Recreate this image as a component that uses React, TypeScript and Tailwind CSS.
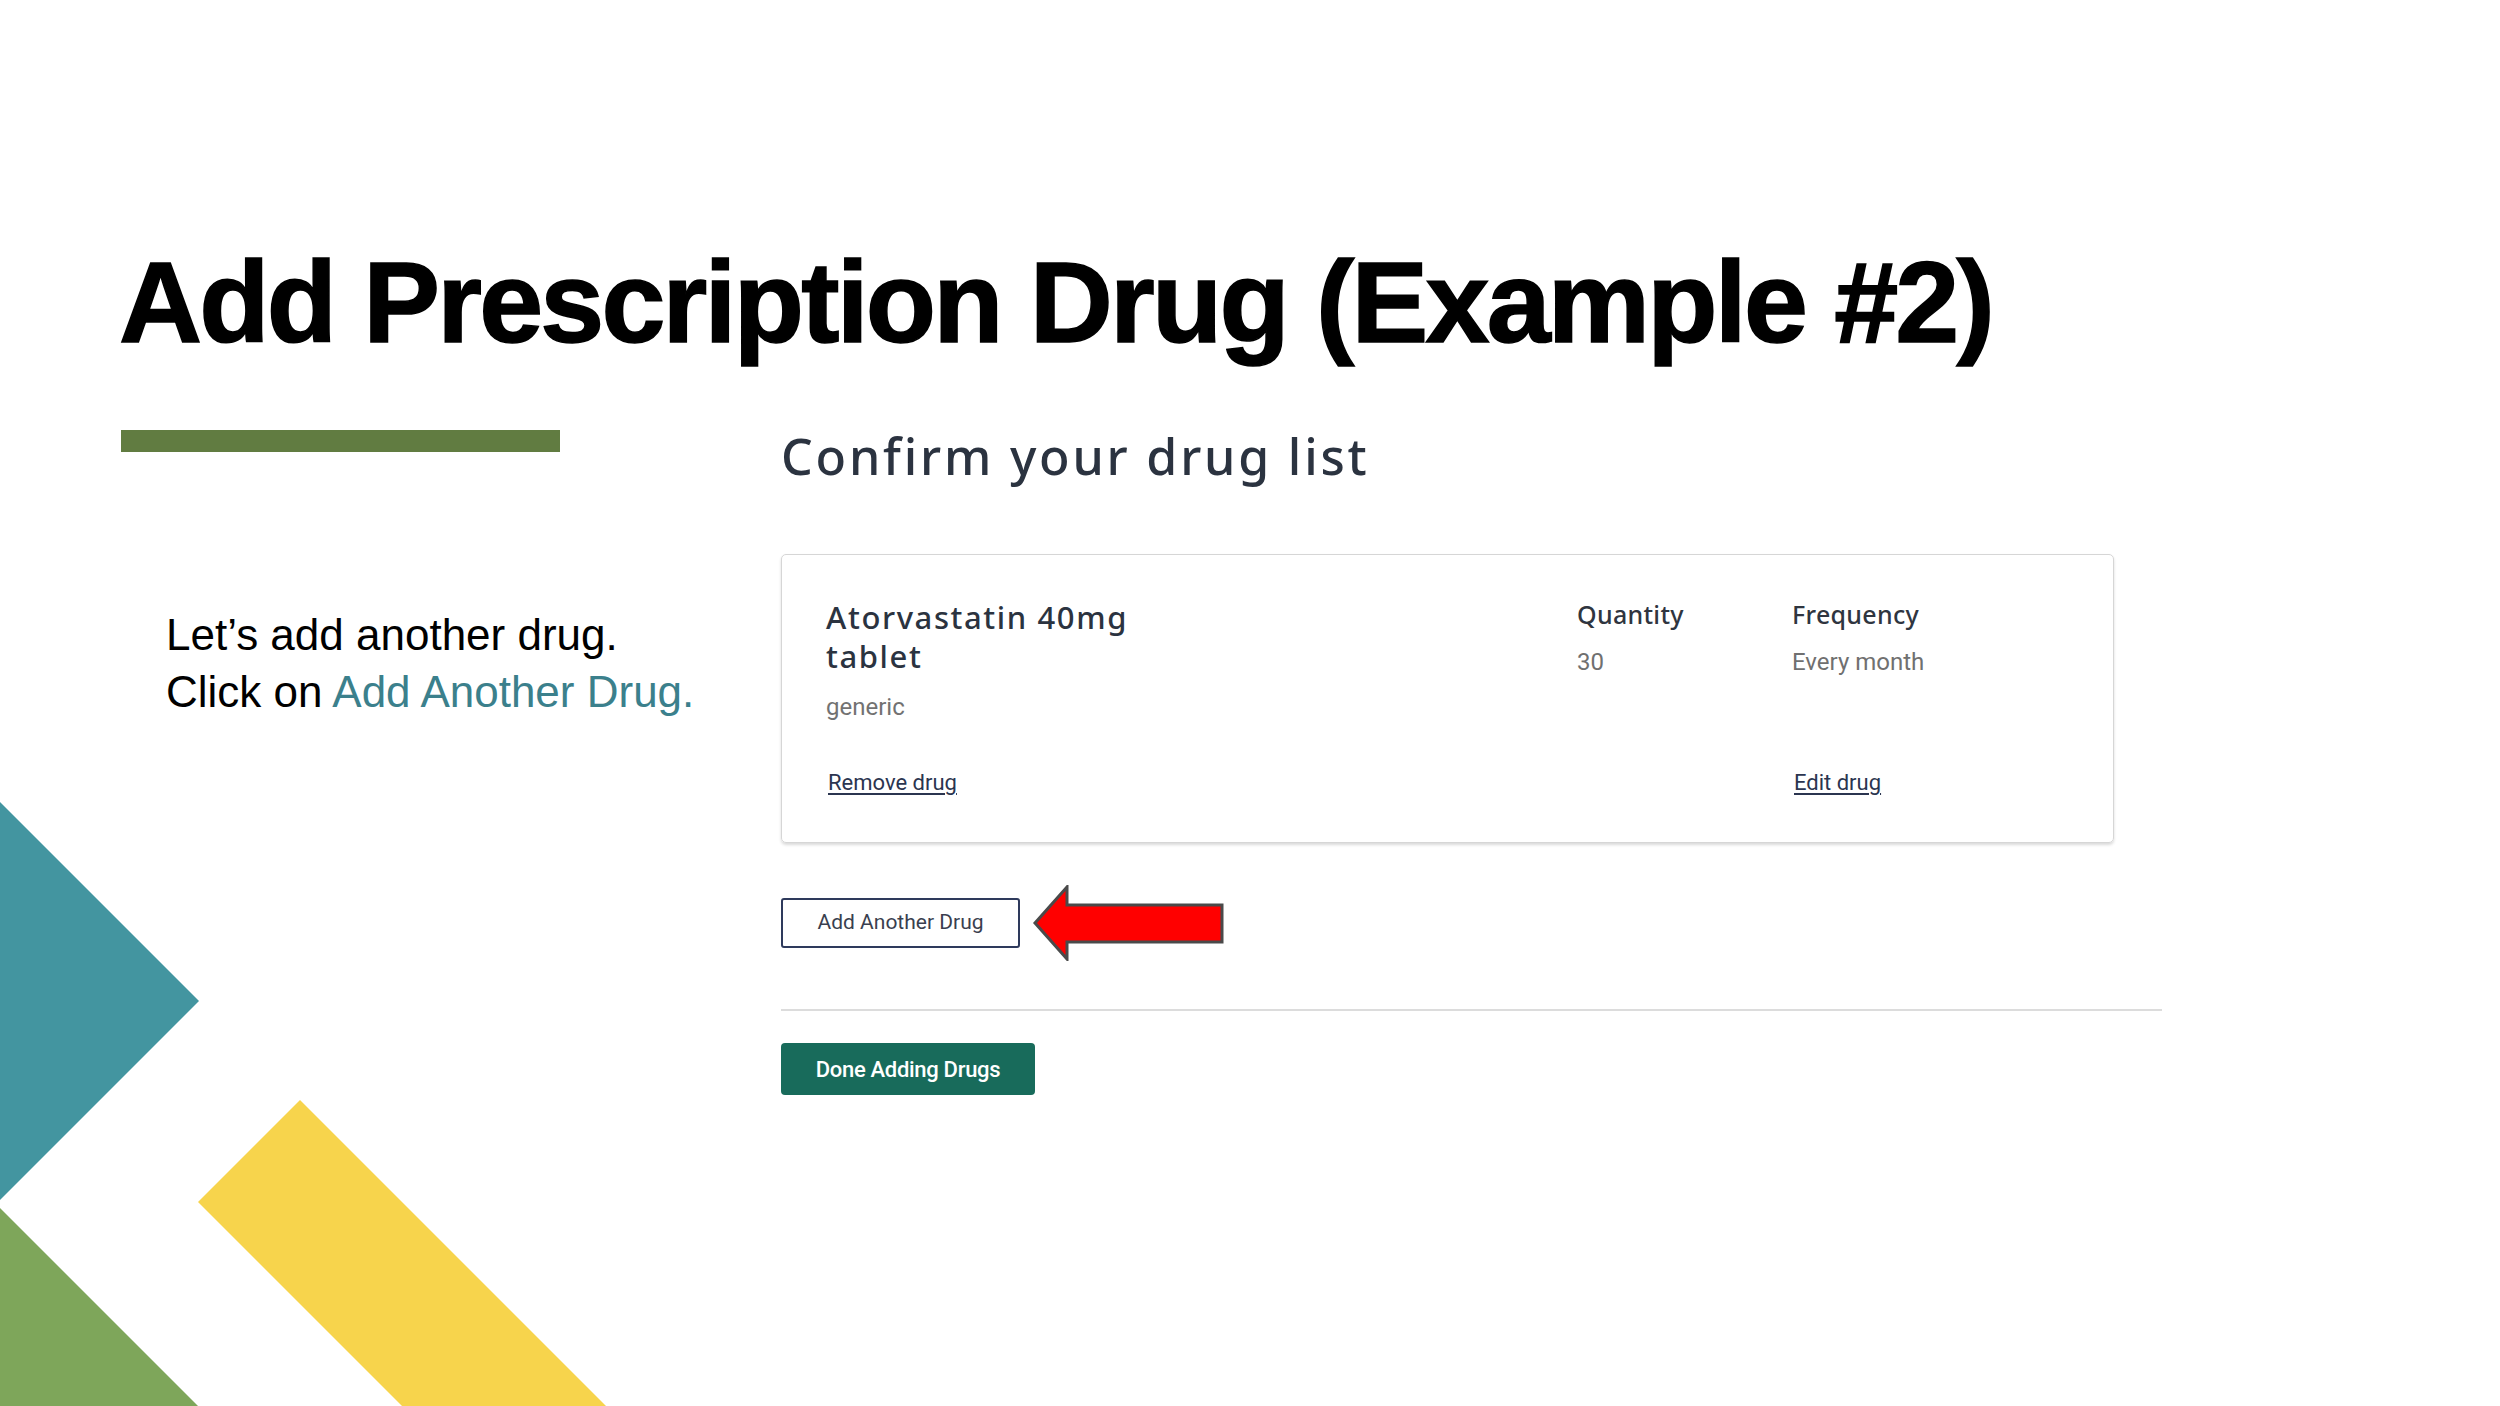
import React from "react";

const drugs = [
  {
    name: "Atorvastatin 40mg tablet",
    kind: "generic",
    quantity: "30",
    frequency: "Every month",
  },
];

function Decorations() {
  return (
    <svg
      className="absolute left-0 top-0 pointer-events-none"
      width="620"
      height="1406"
      viewBox="0 0 620 1406"
      aria-hidden="true"
    >
      <polygon points="0,802 199,1001 0,1200" fill="#4395a0" />
      <polygon points="0,1208 198,1406 0,1406" fill="#7ea65a" />
      <polygon points="300,1100 198,1202 402,1406 606,1406" fill="#f7d44c" />
    </svg>
  );
}

function RedArrow() {
  return (
    <svg width="194" height="76" viewBox="0 0 194 76" aria-hidden="true">
      <polygon
        points="3,38 35,2 35,20 190,20 190,57 35,57 35,74"
        fill="#ff0000"
        stroke="#4a4a4a"
        strokeWidth="3"
        strokeLinejoin="miter"
      />
    </svg>
  );
}

export default function App() {
  return (
    <div className="relative w-[2500px] h-[1406px] overflow-hidden bg-white">
      <Decorations />

      <div className="relative pt-[245px]">
        <h1 className="pl-[119px] font-['Liberation_Sans',Arial,sans-serif] text-[115px] leading-none font-bold tracking-[-2.8px] text-black [-webkit-text-stroke:1.5px_#000]">
          Add Prescription Drug (Example #2)
        </h1>

        <div className="flex mt-[70px]">
          {/* left column: accent bar + hint */}
          <div className="w-[781px] shrink-0 pl-[121px]">
            <div className="w-[439px] h-[22px] bg-[#617c41]" />
            <p className="mt-[154px] pl-[45px] font-['Liberation_Sans',Arial,sans-serif] text-[44px] leading-[57px] text-black">
              Let’s add another drug.
              <br />
              Click on <span className="text-[#3b808c]">Add Another Drug.</span>
            </p>
          </div>

          {/* right column: the drug list screen */}
          <div className="w-[1381px]">
            <h2 className="mt-[1px] font-['Noto_Sans',sans-serif] text-[50px] leading-[50px] font-medium tracking-[2.8px] text-[#2b3340]">
              Confirm your drug list
            </h2>

            {drugs.map((d) => (
              <div
                key={d.name}
                className="mt-[73px] w-[1333px] border border-[#d6d6d6] rounded-[5px] shadow-[0_2px_3px_rgba(0,0,0,0.15)] pt-[43px] pb-[45px] pl-[44px] grid grid-cols-[751px_215px_1fr]"
              >
                <div>
                  <p className="w-[340px] font-['Noto_Sans',sans-serif] text-[31px] leading-[39px] font-medium tracking-[1.6px] text-[#2b3340]">
                    {d.name}
                  </p>
                  <p className="mt-[15px] font-['Roboto',sans-serif] text-[24px] leading-[32px] text-[#727272]">
                    {d.kind}
                  </p>
                </div>
                <div>
                  <p className="font-['Noto_Sans',sans-serif] text-[25px] leading-[32px] font-medium tracking-[0.3px] text-[#2f3540]">
                    Quantity
                  </p>
                  <p className="mt-[16px] font-['Roboto',sans-serif] text-[24px] leading-[32px] text-[#707070]">
                    {d.quantity}
                  </p>
                </div>
                <div>
                  <p className="font-['Noto_Sans',sans-serif] text-[25px] leading-[32px] font-medium tracking-[0.3px] text-[#2f3540]">
                    Frequency
                  </p>
                  <p className="mt-[16px] font-['Roboto',sans-serif] text-[24px] leading-[32px] text-[#707070]">
                    {d.frequency}
                  </p>
                </div>

                <div className="mt-[46px] pl-[2px]">
                  <a className="font-['Roboto',sans-serif] text-[22px] leading-[28px] text-[#2b3550] underline underline-offset-[3px]">
                    Remove drug
                  </a>
                </div>
                <div />
                <div className="mt-[46px] pl-[2px]">
                  <a className="font-['Roboto',sans-serif] text-[22px] leading-[28px] text-[#2b3550] underline underline-offset-[3px]">
                    Edit drug
                  </a>
                </div>
              </div>
            ))}

            <div className="mt-[42px] flex items-center h-[76px]">
              <button className="w-[239px] h-[50px] border-2 border-[#2e3a5c] rounded-[3px] bg-white font-['Roboto',sans-serif] text-[21px] text-[#3a3f4f]">
                Add Another Drug
              </button>
              <div className="ml-[12px]">
                <RedArrow />
              </div>
            </div>

            <div className="mt-[48px] h-[2px] bg-[#dcdcdc]" />

            <button className="mt-[32px] w-[254px] h-[52px] rounded-[4px] bg-[#186b5b] font-['Roboto',sans-serif] text-[22px] font-medium text-white tracking-[-0.3px]">
              Done Adding Drugs
            </button>
          </div>
        </div>
      </div>
    </div>
  );
}
